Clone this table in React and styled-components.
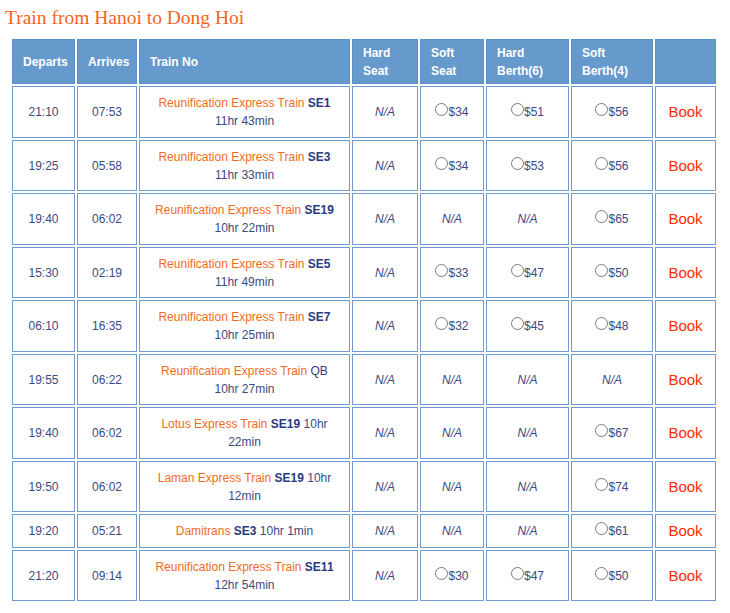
import styled, { createGlobalStyle } from "styled-components";

const GlobalStyle = createGlobalStyle`
    body {
        margin: 0;
        background: #fff;
        font-family: "Liberation Sans", Arial, sans-serif;
    }
`;

const Page = styled.div`
    padding: 6px 0 0 5px;
`;

const Title = styled.h2`
    margin: 0 0 8px;
    font-family: "Liberation Serif", "Times New Roman", serif;
    font-weight: normal;
    font-size: 19.5px;
    line-height: 23px;
    color: #f26522;
`;

const Table = styled.table`
    table-layout: fixed;
    width: 708px;
    margin-left: 5px;
    border-collapse: separate;
    border-spacing: 2px;
    font-size: 12px;
`;

const HeadCell = styled.th`
    box-sizing: border-box;
    background: #6699cc;
    border: 1px solid #5b8fc6;
    color: #fff;
    font-weight: bold;
    text-align: left;
    padding: 4px 10px 3px;
    line-height: 18px;
    height: 45px;
    vertical-align: middle;
`;

const Cell = styled.td`
    box-sizing: border-box;
    border: 1px solid #6f9bd1;
    padding: 7px 10px 6.5px;
    text-align: center;
    line-height: 18px;
    color: #3b4a80;
    font-size: ${(p) => (p.$book ? "15px" : "12px")};
    vertical-align: middle;
`;

const TrainName = styled.span`
    color: #f26b1d;
`;

const Code = styled.span`
    color: #2b3a80;
    font-weight: ${(p) => (p.$plain ? "normal" : "bold")};
`;

const NA = styled.i`
    color: #3b4a80;
`;

const Radio = styled.span`
    display: inline-block;
    box-sizing: border-box;
    width: 13px;
    height: 13px;
    border: 1px solid #7a7a7a;
    border-radius: 50%;
    vertical-align: 0px;
`;

const BookLink = styled.span`
    color: #ff2a00;
`;

const cols = [63, 60, 211, 66, 64, 83, 82, 61];

const trains = [
    ["21:10", "07:53", "Reunification Express Train", "SE1", "11hr 43min", [null, 34, 51, 56]],
    ["19:25", "05:58", "Reunification Express Train", "SE3", "11hr 33min", [null, 34, 53, 56]],
    ["19:40", "06:02", "Reunification Express Train", "SE19", "10hr 22min", [null, null, null, 65]],
    ["15:30", "02:19", "Reunification Express Train", "SE5", "11hr 49min", [null, 33, 47, 50]],
    ["06:10", "16:35", "Reunification Express Train", "SE7", "10hr 25min", [null, 32, 45, 48]],
    ["19:55", "06:22", "Reunification Express Train", "QB", "10hr 27min", [null, null, null, null]],
    ["19:40", "06:02", "Lotus Express Train", "SE19", "10hr 22min", [null, null, null, 67]],
    ["19:50", "06:02", "Laman Express Train", "SE19", "10hr 12min", [null, null, null, 74]],
    ["19:20", "05:21", "Damitrans", "SE3", "10hr 1min", [null, null, null, 61]],
    ["21:20", "09:14", "Reunification Express Train", "SE11", "12hr 54min", [null, 30, 47, 50]],
];

const Price = ({ value }) =>
    value == null ? (
        <NA>N/A</NA>
    ) : (
        <>
            <Radio />${value}
        </>
    );

export default function App() {
    return (
        <Page>
            <GlobalStyle />
            <Title>Train from Hanoi to Dong Hoi</Title>
            <Table>
                <colgroup>
                    {cols.map((w, i) => (
                        <col key={i} style={{ width: w }} />
                    ))}
                </colgroup>
                <thead>
                    <tr>
                        <HeadCell>Departs</HeadCell>
                        <HeadCell>Arrives</HeadCell>
                        <HeadCell>Train No</HeadCell>
                        <HeadCell>Hard<br />Seat</HeadCell>
                        <HeadCell>Soft<br />Seat</HeadCell>
                        <HeadCell>Hard<br />Berth(6)</HeadCell>
                        <HeadCell>Soft<br />Berth(4)</HeadCell>
                        <HeadCell />
                    </tr>
                </thead>
                <tbody>
                    {trains.map(([dep, arr, name, code, dur, prices], i) => (
                        <tr key={i}>
                            <Cell>{dep}</Cell>
                            <Cell>{arr}</Cell>
                            <Cell>
                                <TrainName>{name}</TrainName>{" "}
                                <Code $plain={code === "QB"}>{code}</Code> {dur}
                            </Cell>
                            {prices.map((p, j) => (
                                <Cell key={j}>
                                    <Price value={p} />
                                </Cell>
                            ))}
                            <Cell $book>
                                <BookLink>Book</BookLink>
                            </Cell>
                        </tr>
                    ))}
                </tbody>
            </Table>
        </Page>
    );
}
